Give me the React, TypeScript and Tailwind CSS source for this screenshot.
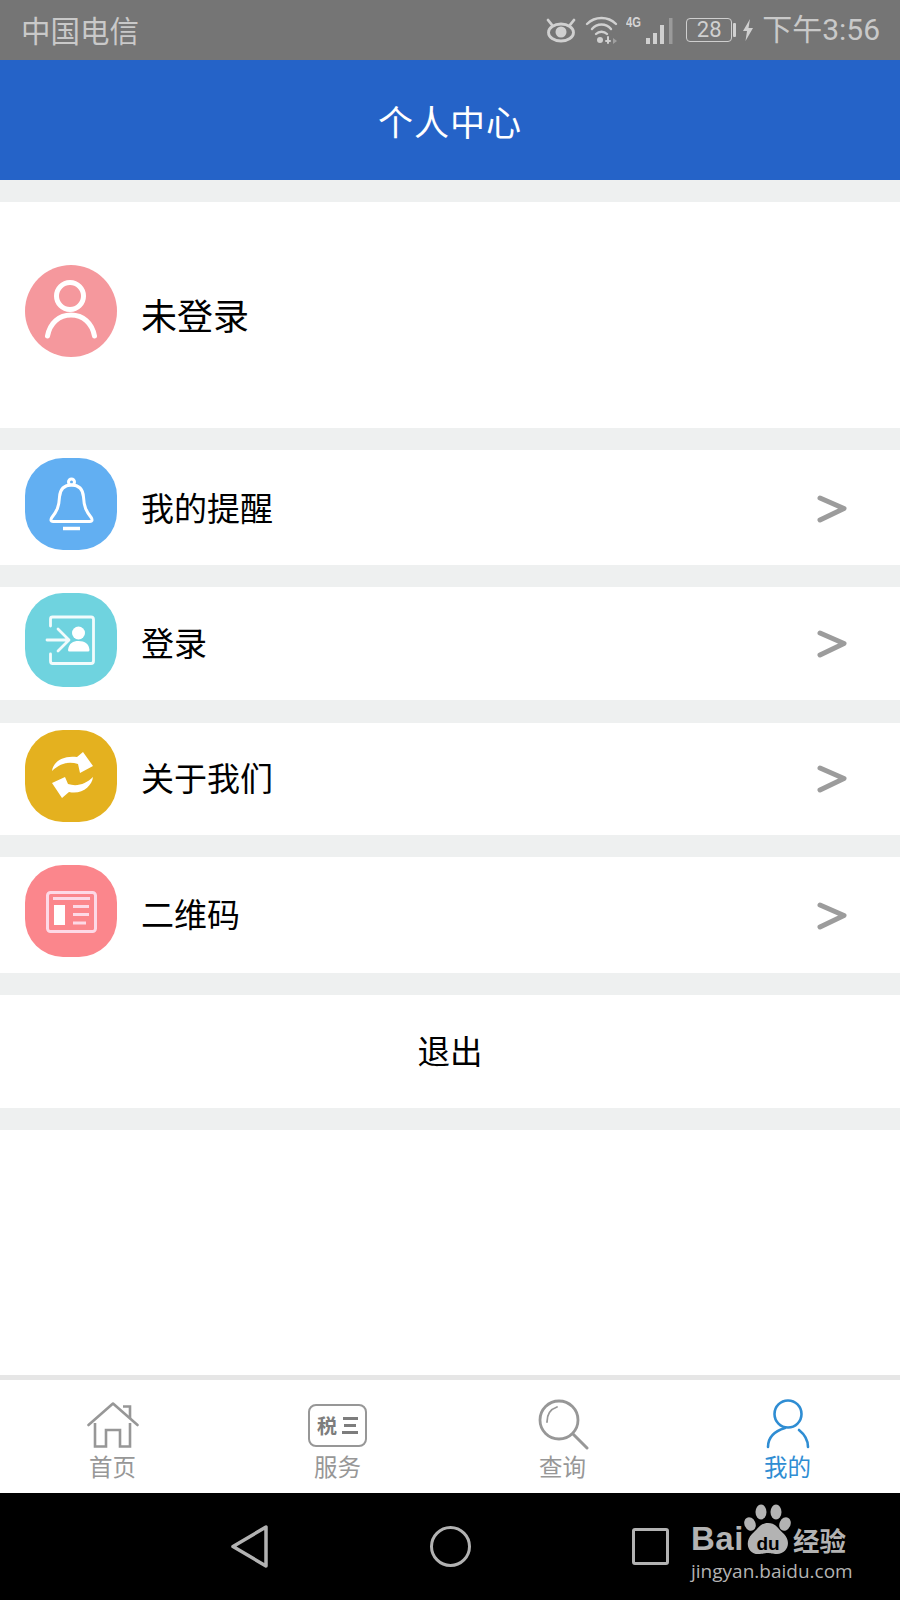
import React from "react";

const CJK = "font-['Noto_Sans_CJK_SC','Noto_Sans',sans-serif]";

function Chevron({ cls }: { cls: string }) {
  return (
    <svg width="32" height="28" viewBox="0 0 32 28" className={`mr-[52px] shrink-0 ${cls}`}>
      <path d="M4 3 L28 13.500 L4 25" fill="none" stroke="#9c9c9c" strokeWidth="5" strokeLinecap="round" strokeLinejoin="round" />
    </svg>
  );
}

function BellIcon() {
  return (
    <svg width="92" height="92" viewBox="0 0 92 92" fill="none" stroke="#fff" strokeWidth="3" strokeLinecap="round" strokeLinejoin="round">
      <circle cx="46.500" cy="24" r="3" />
      <path d="M46.500 27 C38 27 35 32 34.500 39 C34 49 32 53 26.500 60 Q25 63.500 28 63.500 L65 63.500 Q68 63.500 66.500 60 C61 53 59 49 58.500 39 C58 32 55 27 46.500 27 Z" />
      <path d="M38 70.500 H55" strokeWidth="3.500" strokeLinecap="butt" />
    </svg>
  );
}

function LoginIcon() {
  return (
    <svg width="92" height="94" viewBox="0 0 92 94" fill="none" stroke="#f2fbfc" strokeWidth="2.800" strokeLinecap="round" strokeLinejoin="round">
      <path d="M25.500 33 V26 Q25.500 24 27.500 24 H66 Q68.500 24 68.500 26.500 V68 Q68.500 70.500 66 70.500 H27.500 Q25.500 70.500 25.500 68 V61" />
      <path d="M22 47 H43 M33 36 L44 47 L33 58" />
      <circle cx="53.500" cy="40" r="6.500" fill="#fff" stroke="none" />
      <path d="M43 57 C44 50 48 48 53.500 48 C60 48 64 51 64.500 57 Q64.500 58.500 63 58.500 H44.500 Q43 58.500 43 57 Z" fill="#fff" stroke="none" />
    </svg>
  );
}

function SyncIcon() {
  return (
    <svg width="92" height="92" viewBox="0 0 92 92" fill="#fff">
      <path d="M27 41 C28 32 38 25 52 27 L58 22 L68 36 L55 43 L53 34 C44 31 35 33 27 41 Z" />
      <path d="M68 47 C67 56 57 65 44 62 L37 68 L27 53 L40 47 L43 54 C52 57 61 54 68 47 Z" />
    </svg>
  );
}

function NewsIcon() {
  return (
    <svg width="92" height="92" viewBox="0 0 92 92" fill="none">
      <rect x="22.500" y="27.500" width="48" height="39" rx="3" stroke="#fdd9e6" strokeWidth="3" />
      <path d="M28 33.500 H65" stroke="#fdd9e6" strokeWidth="2.800" />
      <rect x="29" y="40" width="11" height="20" fill="#fff" />
      <path d="M48 41.500 H64 M48 49.500 H64 M48 58 H61" stroke="#fdd9e6" strokeWidth="3" />
    </svg>
  );
}

function MenuRow({
  h,
  color,
  icon,
  label,
  iconCls,
  labelCls,
  chevCls,
}: {
  h: string;
  color: string;
  icon: React.ReactNode;
  label: string;
  iconCls: string;
  labelCls: string;
  chevCls: string;
}) {
  return (
    <div className={`${h} bg-white flex items-center`}>
      <div className={`${color} ${iconCls} ml-[25px] w-[92px] rounded-[38px] flex items-center justify-center shrink-0`}>{icon}</div>
      <div className={`${labelCls} ml-[24px] flex-1 text-[33px] leading-none text-black ${CJK}`}>{label}</div>
      <Chevron cls={chevCls} />
    </div>
  );
}

function Gap({ cls = "h-[22px]" }: { cls?: string }) {
  return <div className={`${cls} bg-[#eef0f0]`} />;
}

function Tab({ icon, label, active, iconCls }: { icon: React.ReactNode; label: string; active?: boolean; iconCls?: string }) {
  return (
    <div className="flex flex-col items-center">
      <div className={`h-[53px] mt-[17px] flex items-end justify-center ${iconCls ?? ""}`}>{icon}</div>
      <div className={`mt-[1px] text-[23.500px] leading-[30px] ${active ? "text-[#2f8dd3]" : "text-[#979797]"} ${CJK}`}>{label}</div>
    </div>
  );
}

export default function App() {
  return (
    <div className={`w-[900px] h-[1600px] flex flex-col bg-white overflow-hidden ${CJK}`}>
      {/* status bar */}
      <div className="h-[60px] bg-[#757575] flex items-center justify-between pl-[21px] pr-[20px] text-[#c9c9c9]">
        <div className="text-[29.500px] leading-none">中国电信</div>
        <div className="flex items-center">
          <svg width="32" height="28" viewBox="0 0 32 28" fill="none" stroke="#d0d0d0" strokeWidth="2.800" strokeLinecap="round">
            <path d="M3 4 L7 9 M29 4 L25 9" />
            <ellipse cx="16" cy="16.500" rx="12.500" ry="8.500" />
            <circle cx="16" cy="16" r="5.500" fill="#d0d0d0" stroke="none" />
          </svg>
          <svg width="36" height="30" viewBox="0 0 36 30" fill="none" stroke="#d0d0d0" strokeWidth="2.400" strokeLinecap="round" className="ml-[7px]">
            <path d="M3 9 C11 1 24 1 32 9 M8 14 C13 8 22 8 27 14 M12 19 C15 16 20 16 23 19" />
            <circle cx="16" cy="25" r="3" fill="#d0d0d0" stroke="none" />
            <path d="M24 22 V28 M22 26 H26" strokeWidth="2" />
            <path d="M29 23 L33 26 L29 29 Z" fill="#a0a0a0" stroke="none" />
          </svg>
          <div className="ml-[6px] mb-[17px] w-[18px] text-[14px] leading-none font-bold text-[#d4d4d4] font-['Liberation_Sans',sans-serif] scale-x-[0.8] origin-left">4G</div>
          <svg width="30" height="28" viewBox="0 0 30 28" fill="#d0d0d0" className="mt-[1px]">
            <rect x="2" y="21" width="4" height="6" />
            <rect x="9" y="16" width="4" height="11" />
            <rect x="16" y="8" width="4" height="19" />
            <rect x="25" y="1" width="3.500" height="26" fill="#9a9a9a" />
          </svg>
          <div className="ml-[12px] w-[46px] h-[24px] border-[1.500px] border-[#cfcfcf] rounded-[4px] flex items-center justify-center text-[22px] leading-none font-['Roboto',sans-serif] text-[#d0d0d0]">28</div>
          <div className="ml-[1px] w-[3px] h-[14px] bg-[#d0d0d0] rounded-[1px]" />
          <svg width="12" height="22" viewBox="0 0 12 22" fill="#d0d0d0" className="ml-[6px]">
            <path d="M8 0 L1 12 H5 L3.500 22 L11 9 H6.500 Z" />
          </svg>
          <div className="ml-[8px] text-[30px] leading-none whitespace-nowrap font-['Roboto','Noto_Sans_CJK_SC',sans-serif]">下午3:56</div>
        </div>
      </div>

      {/* header */}
      <div className="h-[120px] bg-[#2563c8] flex items-center justify-center text-white text-[35px] leading-none tracking-[1px]">个人中心</div>
      <Gap />

      {/* profile */}
      <div className="h-[226px] bg-white flex items-center">
        <div className="ml-[25px] mb-[8px] w-[92px] h-[92px] rounded-full bg-[#f5989d] flex items-center justify-center shrink-0">
          <svg width="92" height="92" viewBox="0 0 92 92" fill="none" stroke="#fff" strokeWidth="5" strokeLinecap="round">
            <circle cx="45" cy="31" r="13.500" />
            <path d="M22.500 71 C25 58 34 50 46 50 C58 50 67 58 69.500 71" />
          </svg>
        </div>
        <div className="ml-[24px] mb-[2px] text-[36px] leading-none text-black">未登录</div>
      </div>
      <Gap />

      <MenuRow h="h-[115px]" color="bg-[#62aff2]" iconCls="h-[92px] mb-[8px]" labelCls="mb-[0px]" chevCls="mt-[3px]" icon={<BellIcon />} label="我的提醒" />
      <Gap />
      <MenuRow h="h-[113px]" color="bg-[#6fd3df]" iconCls="h-[94px] mb-[8px]" labelCls="mb-[3px]" chevCls="mt-[0px]" icon={<LoginIcon />} label="登录" />
      <Gap cls="h-[23px]" />
      <MenuRow h="h-[112px]" color="bg-[#e4b11f]" iconCls="h-[92px] mb-[6px]" labelCls="mb-[3px]" chevCls="mt-[0px]" icon={<SyncIcon />} label="关于我们" />
      <Gap />
      <MenuRow h="h-[116px]" color="bg-[#fb868c]" iconCls="h-[92px] mb-[8px]" labelCls="mb-[3px]" chevCls="mt-[2px]" icon={<NewsIcon />} label="二维码" />
      <Gap />

      {/* logout */}
      <div className="h-[113px] bg-white flex items-center justify-center pb-[3px] text-[32.500px] leading-none text-black">退出</div>
      <Gap />

      <div className="flex-1 bg-white" />

      {/* tabs */}
      <div className="h-[118px] border-t-[5px] border-[#e6e6e6] bg-white grid grid-cols-4">
        <Tab
          label="首页"
          iconCls="pb-[1px]"
          icon={
            <svg width="52" height="47" viewBox="0 0 52 47" fill="none" stroke="#979797" strokeWidth="2.600">
              <path d="M1.500 23 L26 1.500 L50.500 23" strokeLinecap="round" strokeLinejoin="round" />
              <path d="M36 4.500 H43 V16" />
              <path d="M8 21 V44.500 H19 V28 H33 V44.500 H43 V21" />
            </svg>
          }
        />
        <Tab
          label="服务"
          icon={
            <div className="mb-[3px] w-[59px] h-[43px] border-[2px] border-[#979797] rounded-[8px] flex items-center justify-center gap-[5px]">
              <span className="text-[20px] leading-none font-bold text-[#7d7d7d]">税</span>
              <div className="flex flex-col gap-[4px]">
                <div className="w-[15px] h-[3px] mx-auto bg-[#7d7d7d]" />
                <div className="w-[12px] h-[3px] mx-auto bg-[#7d7d7d]" />
                <div className="w-[16px] h-[3px] bg-[#7d7d7d]" />
              </div>
            </div>
          }
        />
        <Tab
          label="查询"
          icon={
            <svg width="52" height="52" viewBox="0 0 52 52" fill="none" stroke="#979797" strokeWidth="2.800" strokeLinecap="round">
              <circle cx="22" cy="22" r="19" />
              <path d="M36 36 L50 50" strokeWidth="3" />
              <path d="M10 24 C10 16 14 11 20 9" strokeWidth="1.800" />
            </svg>
          }
        />
        <Tab
          active
          label="我的"
          iconCls="pb-[1px]"
          icon={
            <svg width="44" height="50" viewBox="0 0 44 50" fill="none" stroke="#2f8dd3" strokeWidth="2.600" strokeLinecap="round">
              <circle cx="22" cy="15" r="13.500" />
              <path d="M2 48 C2 38 9 32 19 29" />
              <path d="M33 31 C38 35 42 41 42 48" />
            </svg>
          }
        />
      </div>

      {/* nav bar */}
      <div className="relative h-[107px] bg-black grid grid-cols-3 px-[150px] items-center">
        <div className="flex justify-center">
          <svg width="38" height="44" viewBox="0 0 38 44" fill="none" stroke="#b2b2b2" strokeWidth="3.500" strokeLinejoin="round">
            <path d="M35 2 V41 L2 21.500 Z" />
          </svg>
        </div>
        <div className="flex justify-center">
          <div className="w-[41px] h-[41px] rounded-full border-[3.500px] border-[#b2b2b2]" />
        </div>
        <div className="flex justify-center">
          <div className="w-[37px] h-[37px] rounded-[3px] border-[3.500px] border-[#b2b2b2]" />
        </div>

        {/* baidu watermark */}
        <div className="absolute left-[691px] top-[11px] w-[165px] h-[84px] text-[#b3b3b3]">
          <div className="flex items-end h-[51px]">
            <span className="mb-[2px] w-[52px] text-[33px] leading-[28px] tracking-[0.500px] font-bold font-['Liberation_Sans',sans-serif]">Bai</span>
            <div className="relative w-[50px] h-[51px] shrink-0">
              <svg width="50" height="51" viewBox="0 0 50 51" fill="#b3b3b3">
                <ellipse cx="18" cy="8" rx="5.500" ry="7.500" />
                <ellipse cx="33" cy="8" rx="5.500" ry="7.500" />
                <ellipse cx="7" cy="20" rx="5.500" ry="7" transform="rotate(-25 7 20)" />
                <ellipse cx="42" cy="20" rx="5.500" ry="7" transform="rotate(25 42 20)" />
                <path d="M25 19 C33 19 35 25 41 30 C49 38 44 50 34 50 C29 50 28 49 25 49 C22 49 20 50 15 50 C5 50 1 38 9 30 C15 25 17 19 25 19 Z" />
              </svg>
              <span className="absolute left-0 right-0 top-[30px] text-center text-[19px] leading-none font-bold text-black font-['Liberation_Sans',sans-serif]">du</span>
            </div>
            <span className="text-[26.500px] leading-[30px] font-bold">经验</span>
          </div>
          <div className="mt-[4px] text-[19px] leading-[24px] whitespace-nowrap font-['Open_Sans',sans-serif]">jingyan.baidu.com</div>
        </div>
      </div>
    </div>
  );
}
